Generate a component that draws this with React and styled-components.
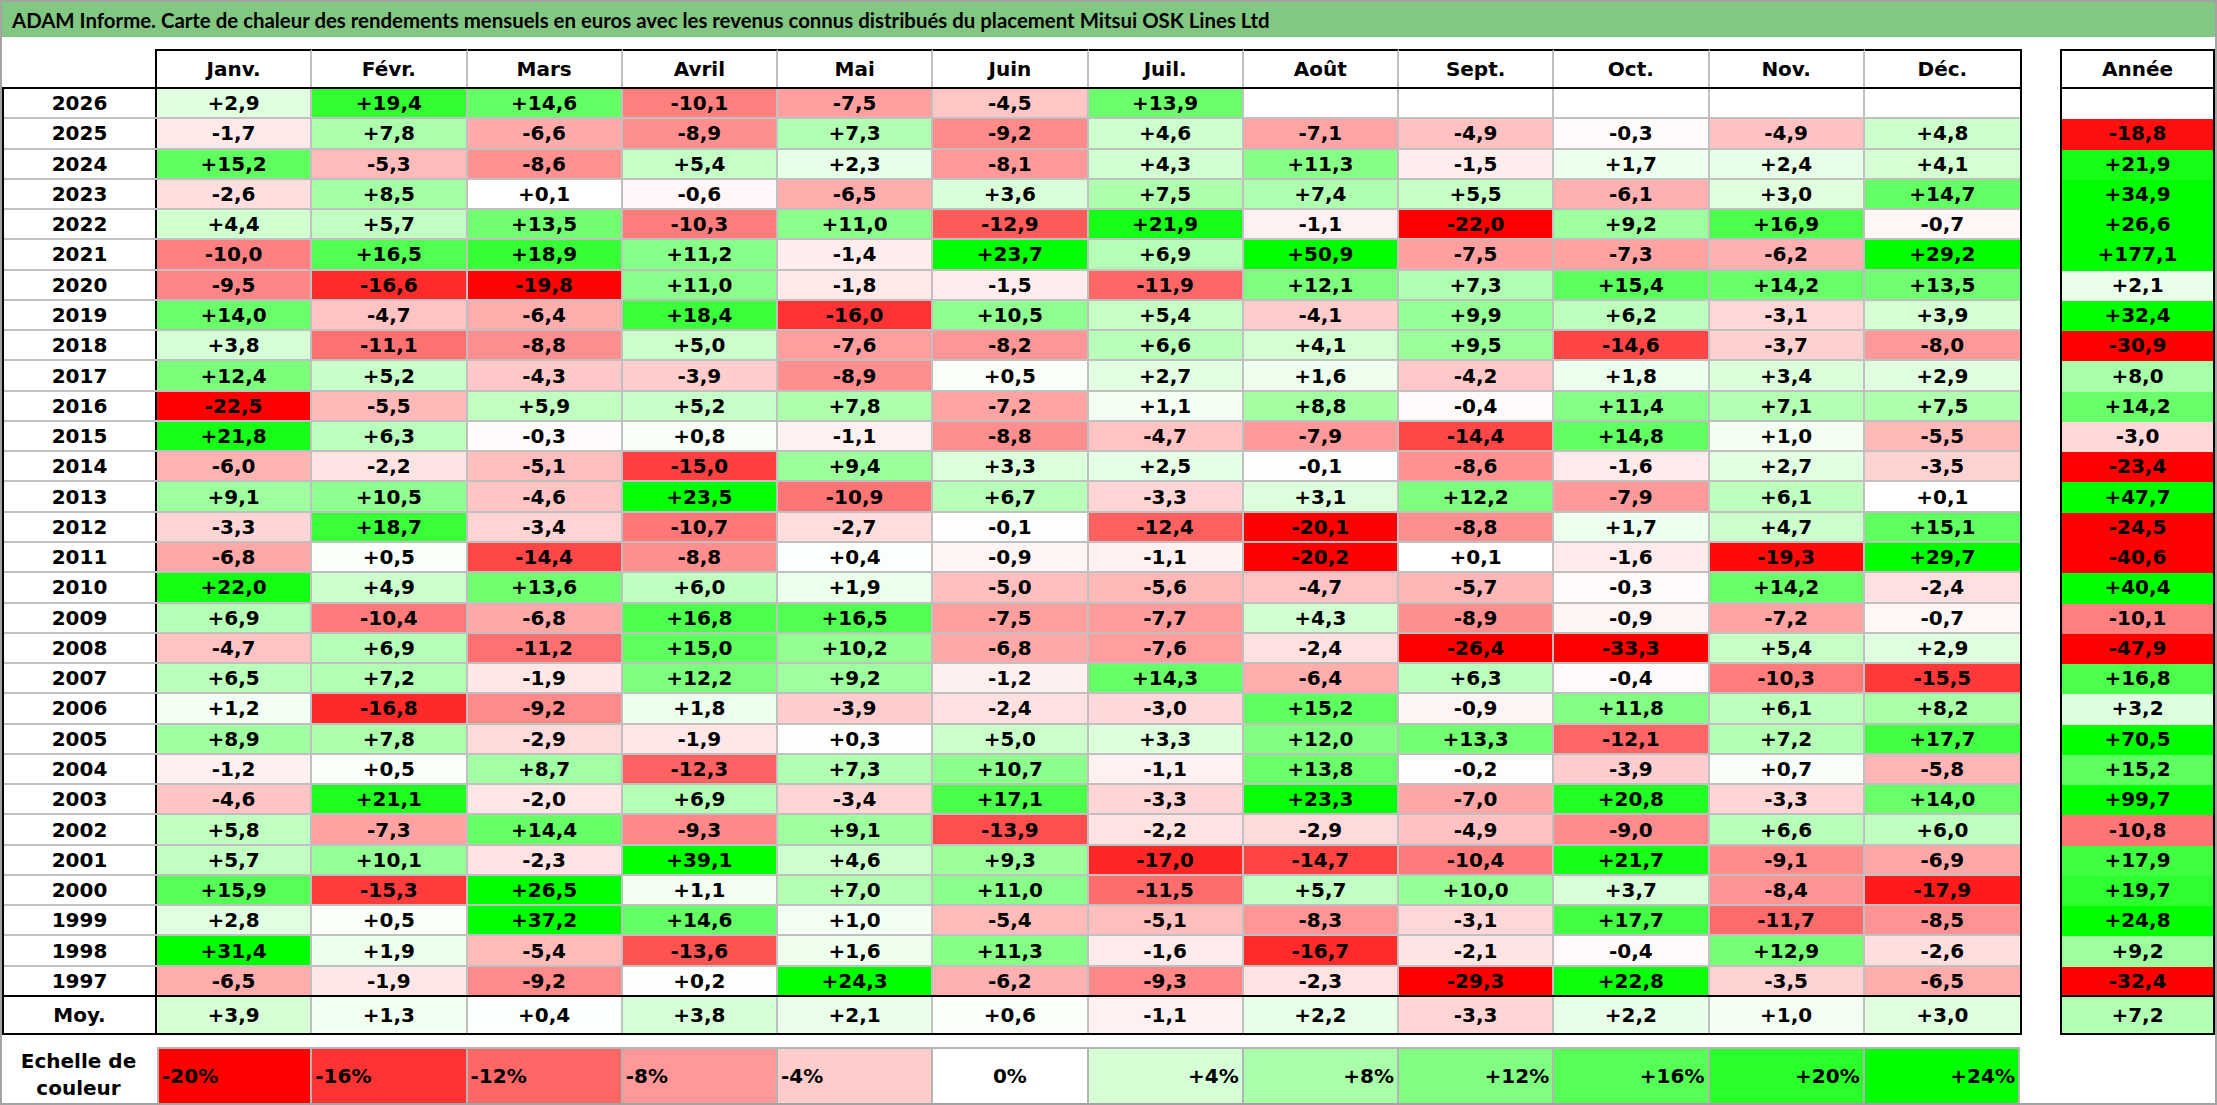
import React from 'react';
import styled, { createGlobalStyle } from 'styled-components';

const GlobalStyle = createGlobalStyle`
  html, body { margin: 0; padding: 0; background: #fff; }
  body { font-family: "DejaVu Sans", "Open Sans", sans-serif; color: #000; }
`;

const MONTHS = ['Janv.', 'Févr.', 'Mars', 'Avril', 'Mai', 'Juin', 'Juil.', 'Août', 'Sept.', 'Oct.', 'Nov.', 'Déc.'];

const RAW = `2026|+2,9 +19,4 +14,6 -10,1 -7,5 -4,5 +13,9 . . . . .|.
2025|-1,7 +7,8 -6,6 -8,9 +7,3 -9,2 +4,6 -7,1 -4,9 -0,3 -4,9 +4,8|-18,8
2024|+15,2 -5,3 -8,6 +5,4 +2,3 -8,1 +4,3 +11,3 -1,5 +1,7 +2,4 +4,1|+21,9
2023|-2,6 +8,5 +0,1 -0,6 -6,5 +3,6 +7,5 +7,4 +5,5 -6,1 +3,0 +14,7|+34,9
2022|+4,4 +5,7 +13,5 -10,3 +11,0 -12,9 +21,9 -1,1 -22,0 +9,2 +16,9 -0,7|+26,6
2021|-10,0 +16,5 +18,9 +11,2 -1,4 +23,7 +6,9 +50,9 -7,5 -7,3 -6,2 +29,2|+177,1
2020|-9,5 -16,6 -19,8 +11,0 -1,8 -1,5 -11,9 +12,1 +7,3 +15,4 +14,2 +13,5|+2,1
2019|+14,0 -4,7 -6,4 +18,4 -16,0 +10,5 +5,4 -4,1 +9,9 +6,2 -3,1 +3,9|+32,4
2018|+3,8 -11,1 -8,8 +5,0 -7,6 -8,2 +6,6 +4,1 +9,5 -14,6 -3,7 -8,0|-30,9
2017|+12,4 +5,2 -4,3 -3,9 -8,9 +0,5 +2,7 +1,6 -4,2 +1,8 +3,4 +2,9|+8,0
2016|-22,5 -5,5 +5,9 +5,2 +7,8 -7,2 +1,1 +8,8 -0,4 +11,4 +7,1 +7,5|+14,2
2015|+21,8 +6,3 -0,3 +0,8 -1,1 -8,8 -4,7 -7,9 -14,4 +14,8 +1,0 -5,5|-3,0
2014|-6,0 -2,2 -5,1 -15,0 +9,4 +3,3 +2,5 -0,1 -8,6 -1,6 +2,7 -3,5|-23,4
2013|+9,1 +10,5 -4,6 +23,5 -10,9 +6,7 -3,3 +3,1 +12,2 -7,9 +6,1 +0,1|+47,7
2012|-3,3 +18,7 -3,4 -10,7 -2,7 -0,1 -12,4 -20,1 -8,8 +1,7 +4,7 +15,1|-24,5
2011|-6,8 +0,5 -14,4 -8,8 +0,4 -0,9 -1,1 -20,2 +0,1 -1,6 -19,3 +29,7|-40,6
2010|+22,0 +4,9 +13,6 +6,0 +1,9 -5,0 -5,6 -4,7 -5,7 -0,3 +14,2 -2,4|+40,4
2009|+6,9 -10,4 -6,8 +16,8 +16,5 -7,5 -7,7 +4,3 -8,9 -0,9 -7,2 -0,7|-10,1
2008|-4,7 +6,9 -11,2 +15,0 +10,2 -6,8 -7,6 -2,4 -26,4 -33,3 +5,4 +2,9|-47,9
2007|+6,5 +7,2 -1,9 +12,2 +9,2 -1,2 +14,3 -6,4 +6,3 -0,4 -10,3 -15,5|+16,8
2006|+1,2 -16,8 -9,2 +1,8 -3,9 -2,4 -3,0 +15,2 -0,9 +11,8 +6,1 +8,2|+3,2
2005|+8,9 +7,8 -2,9 -1,9 +0,3 +5,0 +3,3 +12,0 +13,3 -12,1 +7,2 +17,7|+70,5
2004|-1,2 +0,5 +8,7 -12,3 +7,3 +10,7 -1,1 +13,8 -0,2 -3,9 +0,7 -5,8|+15,2
2003|-4,6 +21,1 -2,0 +6,9 -3,4 +17,1 -3,3 +23,3 -7,0 +20,8 -3,3 +14,0|+99,7
2002|+5,8 -7,3 +14,4 -9,3 +9,1 -13,9 -2,2 -2,9 -4,9 -9,0 +6,6 +6,0|-10,8
2001|+5,7 +10,1 -2,3 +39,1 +4,6 +9,3 -17,0 -14,7 -10,4 +21,7 -9,1 -6,9|+17,9
2000|+15,9 -15,3 +26,5 +1,1 +7,0 +11,0 -11,5 +5,7 +10,0 +3,7 -8,4 -17,9|+19,7
1999|+2,8 +0,5 +37,2 +14,6 +1,0 -5,4 -5,1 -8,3 -3,1 +17,7 -11,7 -8,5|+24,8
1998|+31,4 +1,9 -5,4 -13,6 +1,6 +11,3 -1,6 -16,7 -2,1 -0,4 +12,9 -2,6|+9,2
1997|-6,5 -1,9 -9,2 +0,2 +24,3 -6,2 -9,3 -2,3 -29,3 +22,8 -3,5 -6,5|-32,4`;

const ROWS = RAW.split('\n').map((line) => {
  const [year, months, total] = line.split('|');
  const m = months.trim().split(/\s+/).map((v) => (v === '.' ? '' : v));
  return { year, months: m, total: total.trim() === '.' ? '' : total.trim() };
});

const AVG = {
  months: ['+3,9', '+1,3', '+0,4', '+3,8', '+2,1', '+0,6', '-1,1', '+2,2', '-3,3', '+2,2', '+1,0', '+3,0'],
  total: '+7,2',
};

const LEGEND = [-20, -16, -12, -8, -4, 0, 4, 8, 12, 16, 20, 24];

function heat(str) {
  if (str === '' || str == null) return '#ffffff';
  const v = typeof str === 'number' ? str : parseFloat(String(str).replace(',', '.'));
  if (v < 0) {
    const t = Math.min(-v / 20, 1);
    const c = Math.round(255 * (1 - t));
    return `rgb(255,${c},${c})`;
  }
  const t = Math.min(v / 24, 1);
  const c = Math.round(255 * (1 - t));
  return `rgb(${c},255,${c})`;
}

const GRID = '#c0c0c0';
const COLS = '153px repeat(12, 1fr)';
const CELL_FONT = '20px';

const Frame = styled.div`
  width: 2217px;
  height: 1105px;
  box-sizing: border-box;
  border: 2px solid #a3a3a3;
  display: flex;
  flex-direction: column;
  overflow: hidden;
  background: #fff;
`;

const TitleBar = styled.div`
  flex: none;
  height: 35px;
  background: #82c882;
  display: flex;
  align-items: center;
  padding-left: 10px;
  font-family: Lato, "Open Sans", sans-serif;
  font-weight: 700;
  font-size: 20.4px;
  white-space: nowrap;
`;

const Content = styled.div`
  display: flex;
  margin-top: 12px;
`;

const MonthTable = styled.div`
  width: 2020px;
  display: flex;
  flex-direction: column;
`;

const YearTable = styled.div`
  width: 155px;
  margin-left: 38px;
  display: flex;
  flex-direction: column;
`;

const HeaderRow = styled.div`
  display: grid;
  grid-template-columns: ${COLS};
  height: 38px;
  box-sizing: border-box;
  border-left: 2px solid transparent;
  border-right: 2px solid #000;
`;

const Corner = styled.div`
  border-right: 2px solid #000;
`;

const HeadCell = styled.div`
  box-sizing: border-box;
  border-top: 2px solid #000;
  border-right: 2px solid ${GRID};
  &:last-child { border-right: none; }
  display: flex;
  align-items: center;
  justify-content: center;
  font-weight: 700;
  font-size: ${CELL_FONT};
`;

const Body = styled.div`
  box-sizing: border-box;
  height: 910px;
  border: 2px solid #000;
  display: flex;
  flex-direction: column;
`;

const Row = styled.div`
  flex: 1 1 0;
  min-height: 0;
  display: grid;
  grid-template-columns: ${COLS};
  box-sizing: border-box;
  border-bottom: 2px solid ${GRID};
  &:last-child { border-bottom: none; }
`;

const YearCell = styled.div`
  border-right: 2px solid #000;
  display: flex;
  align-items: center;
  justify-content: center;
  font-weight: 700;
  font-size: ${CELL_FONT};
`;

const Cell = styled.div`
  border-right: 2px solid ${GRID};
  &:last-child { border-right: none; }
  display: flex;
  align-items: center;
  justify-content: center;
  font-weight: 700;
  font-size: ${CELL_FONT};
`;

const MoyRow = styled.div`
  display: grid;
  grid-template-columns: ${COLS};
  height: 38px;
  box-sizing: border-box;
  border: 2px solid #000;
  border-top: none;
`;

const LegendRow = styled.div`
  display: grid;
  grid-template-columns: ${COLS};
  height: 56px;
  margin-top: 12px;
  box-sizing: border-box;
  border-left: 2px solid transparent;
  border-right: 2px solid transparent;
`;

const LegendLabel = styled.div`
  display: flex;
  align-items: center;
  justify-content: center;
  text-align: center;
  font-weight: 700;
  font-size: ${CELL_FONT};
  line-height: 27px;
  padding-right: 4px;
`;

const LegendCell = styled.div`
  box-sizing: border-box;
  border-top: 2px solid #b4b4b4;
  border-right: 2px solid #b4b4b4;
  &:nth-child(2) { border-left: 2px solid #b4b4b4; }
  display: flex;
  align-items: center;
  justify-content: ${(p) => p.$align};
  padding: 0 3px;
  font-weight: 700;
  font-size: ${CELL_FONT};
`;

const YHead = styled.div`
  height: 38px;
  box-sizing: border-box;
  border: 2px solid #000;
  border-bottom: none;
  display: flex;
  align-items: center;
  justify-content: center;
  font-weight: 700;
  font-size: ${CELL_FONT};
`;

const YRow = styled.div`
  flex: 1 1 0;
  min-height: 0;
  box-sizing: border-box;
  border-bottom: 2px solid transparent;
  &:last-child { border-bottom: none; }
  display: flex;
  align-items: center;
  justify-content: center;
  font-weight: 700;
  font-size: ${CELL_FONT};
`;

const YMoy = styled.div`
  height: 38px;
  box-sizing: border-box;
  border: 2px solid #000;
  border-top: none;
  display: flex;
  align-items: center;
  justify-content: center;
  font-weight: 700;
  font-size: ${CELL_FONT};
`;

function legendAlign(v) {
  if (v < 0) return 'flex-start';
  if (v === 0) return 'center';
  return 'flex-end';
}

function legendText(v) {
  if (v > 0) return `+${v}%`;
  return `${v}%`;
}

export default function App() {
  return (
    <>
      <GlobalStyle />
      <Frame>
        <TitleBar>
          ADAM Informe. Carte de chaleur des rendements mensuels en euros avec les revenus connus distribués du placement Mitsui OSK Lines Ltd
        </TitleBar>
        <Content>
          <MonthTable>
            <HeaderRow>
              <Corner />
              {MONTHS.map((m) => (
                <HeadCell key={m}>{m}</HeadCell>
              ))}
            </HeaderRow>
            <Body>
              {ROWS.map((r) => (
                <Row key={r.year}>
                  <YearCell>{r.year}</YearCell>
                  {r.months.map((v, i) => (
                    <Cell key={i} style={{ background: heat(v) }}>
                      {v}
                    </Cell>
                  ))}
                </Row>
              ))}
            </Body>
            <MoyRow>
              <YearCell>Moy.</YearCell>
              {AVG.months.map((v, i) => (
                <Cell key={i} style={{ background: heat(v) }}>
                  {v}
                </Cell>
              ))}
            </MoyRow>
            <LegendRow>
              <LegendLabel>
                Echelle de
                <br />
                couleur
              </LegendLabel>
              {LEGEND.map((v) => (
                <LegendCell key={v} $align={legendAlign(v)} style={{ background: heat(v) }}>
                  {legendText(v)}
                </LegendCell>
              ))}
            </LegendRow>
          </MonthTable>
          <YearTable>
            <YHead>Année</YHead>
            <Body>
              {ROWS.map((r) => (
                <YRow key={r.year} style={{ background: heat(r.total) }}>
                  {r.total}
                </YRow>
              ))}
            </Body>
            <YMoy style={{ background: heat(AVG.total) }}>{AVG.total}</YMoy>
          </YearTable>
        </Content>
      </Frame>
    </>
  );
}
